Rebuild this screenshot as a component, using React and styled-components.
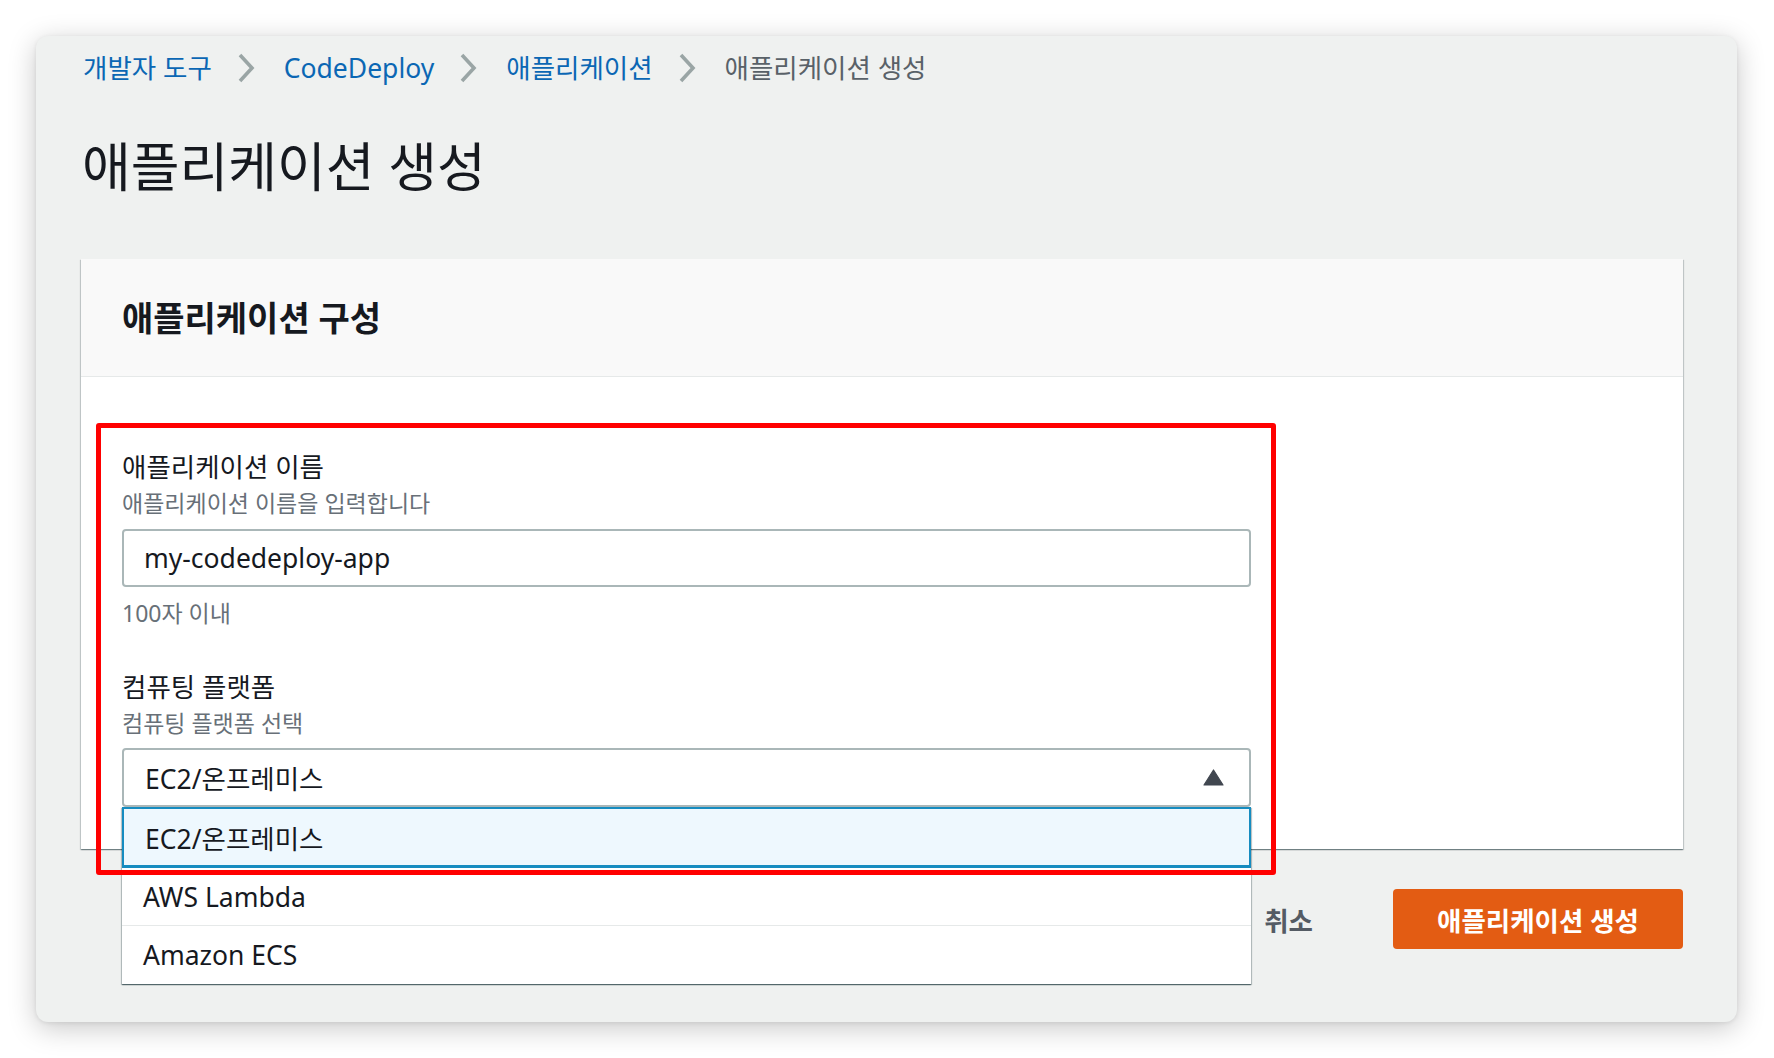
import React from "react";
import styled, { createGlobalStyle } from "styled-components";

const GlobalStyle = createGlobalStyle`
  html, body {
    margin: 0;
    padding: 0;
    background: #ffffff;
  }
  body {
    font-family: "Noto Sans", "Noto Sans CJK KR", sans-serif;
    color: #16191f;
  }
  * {
    box-sizing: border-box;
  }
`;

const crumbs = [
  { label: "개발자 도구", link: true },
  { label: "CodeDeploy", link: true },
  { label: "애플리케이션", link: true },
  { label: "애플리케이션 생성", link: false },
];

const platforms = ["EC2/온프레미스", "AWS Lambda", "Amazon ECS"];

function Chevron() {
  return (
    <ChevronIcon width="18" height="30" viewBox="0 0 18 30" aria-hidden="true">
      <polyline
        points="3,2 15,15 3,28"
        fill="none"
        stroke="#9aa5a5"
        strokeWidth="3.6"
        strokeLinejoin="miter"
      />
    </ChevronIcon>
  );
}

function CaretUp() {
  return (
    <svg width="21" height="17" viewBox="0 0 21 17" aria-hidden="true">
      <path d="M10.5 1 L20 16 L1 16 Z" fill="#414750" stroke="#414750" strokeWidth="1.2" strokeLinejoin="round" />
    </svg>
  );
}

export default function App() {
  const selected = platforms[0];

  return (
    <Page>
      <GlobalStyle />
      <Window>
        <Breadcrumbs>
          {crumbs.map((crumb, index) => (
            <React.Fragment key={crumb.label}>
              {index > 0 && <Chevron />}
              <Crumb $link={crumb.link}>{crumb.label}</Crumb>
            </React.Fragment>
          ))}
        </Breadcrumbs>

        <Heading>애플리케이션 생성</Heading>

        <Panel>
          <PanelHeader>
            <PanelTitle>애플리케이션 구성</PanelTitle>
          </PanelHeader>
          <PanelBody>
            <FormColumn>
              <Label>애플리케이션 이름</Label>
              <Description>애플리케이션 이름을 입력합니다</Description>
              <TextInput readOnly value="my-codedeploy-app" />
              <Constraint>100자 이내</Constraint>

              <Label $spaced>컴퓨팅 플랫폼</Label>
              <Description>컴퓨팅 플랫폼 선택</Description>
              <SelectWrap>
                <SelectBox>
                  <span>{selected}</span>
                  <CaretUp />
                </SelectBox>
                <Menu>
                  {platforms.map((item) => (
                    <Option key={item} $selected={item === selected}>
                      {item}
                    </Option>
                  ))}
                </Menu>
              </SelectWrap>
            </FormColumn>
            <Highlight />
          </PanelBody>
        </Panel>

        <Footer>
          <CancelButton>취소</CancelButton>
          <PrimaryButton>애플리케이션 생성</PrimaryButton>
        </Footer>
      </Window>
    </Page>
  );
}

const Page = styled.div`
  padding: 36px 37px 37px 36px;
  background: #ffffff;
`;

const Window = styled.div`
  background: #eff1f0;
  border-radius: 12px;
  box-shadow: 0 6px 28px rgba(0, 0, 0, 0.22), 0 1px 4px rgba(0, 0, 0, 0.08);
  padding: 16px 54px 73px 45px;
`;

const Breadcrumbs = styled.nav`
  display: flex;
  align-items: center;
  height: 32px;
  padding-left: 2px;
`;

const ChevronIcon = styled.svg`
  flex: none;
  margin: 0 29px 0 25px;
`;

const Crumb = styled.span`
  font-size: 26.5px;
  line-height: 32px;
  color: ${(p) => (p.$link ? "#0b67b4" : "#596168")};
  white-space: nowrap;
`;

const Heading = styled.h1`
  margin: 53px 0 0 1px;
  font-size: 53px;
  line-height: 60px;
  font-weight: 400;
  color: #16191f;
`;

const Panel = styled.section`
  margin-top: 62px;
  background: #ffffff;
  box-shadow: 0 1px 1px 0 rgba(0, 28, 36, 0.35), 1px 1px 1px 0 rgba(0, 28, 36, 0.15),
    -1px 1px 1px 0 rgba(0, 28, 36, 0.15);
`;

const PanelHeader = styled.div`
  display: flex;
  align-items: center;
  height: 118px;
  padding-left: 41px;
  background: #f9f9f9;
  border-bottom: 1px solid #e6e9e9;
`;

const PanelTitle = styled.h2`
  margin: 0;
  font-size: 34px;
  line-height: 40px;
  font-weight: 700;
  color: #16191f;
`;

const PanelBody = styled.div`
  position: relative;
  padding: 74px 41px 42px;
`;

const FormColumn = styled.div`
  width: 1129px;
  display: flex;
  flex-direction: column;
`;

const Label = styled.div`
  margin-top: ${(p) => (p.$spaced ? "44px" : "0")};
  font-size: 26.5px;
  line-height: 32px;
  color: #16191f;
`;

const Description = styled.div`
  margin-top: 6px;
  font-size: 23px;
  line-height: 28px;
  color: #687078;
`;

const TextInput = styled.input`
  margin-top: 12px;
  height: 58px;
  width: 100%;
  padding: 0 20px;
  border: 2px solid #aab7b8;
  border-radius: 4px;
  background: #ffffff;
  font-family: "Noto Sans", "Noto Sans CJK KR", sans-serif;
  font-size: 26.5px;
  color: #16191f;
  outline: none;
`;

const Constraint = styled.div`
  margin-top: 12px;
  font-size: 23px;
  line-height: 28px;
  color: #687078;
`;

const SelectWrap = styled.div`
  position: relative;
  margin-top: 11px;
`;

const SelectBox = styled.div`
  display: flex;
  align-items: center;
  justify-content: space-between;
  height: 59px;
  padding: 0 25px 0 21px;
  border: 2px solid #aab7b8;
  border-radius: 4px;
  background: #ffffff;
  font-size: 26.5px;
  color: #16191f;
`;

const Menu = styled.ul`
  position: absolute;
  top: 100%;
  left: 0;
  right: 0;
  z-index: 2;
  margin: 0;
  padding: 0;
  list-style: none;
  background: #ffffff;
  box-shadow: 0 1px 1px 0 rgba(0, 28, 36, 0.45), 1px 1px 1px 0 rgba(0, 28, 36, 0.2),
    -1px 1px 1px 0 rgba(0, 28, 36, 0.2);
`;

const Option = styled.li`
  display: flex;
  align-items: center;
  height: ${(p) => (p.$selected ? "61px" : "58px")};
  padding: 0 21px;
  font-size: 26.5px;
  color: #16191f;
  background: ${(p) => (p.$selected ? "#eef8fe" : "#ffffff")};
  border: ${(p) => (p.$selected ? "2px solid #168cc0" : "none")};
  border-bottom: ${(p) => (p.$selected ? "3px solid #168cc0" : "1px solid #e6e9e9")};

  &:last-child {
    border-bottom: none;
  }
`;

const Highlight = styled.div`
  position: absolute;
  left: 15px;
  top: 46px;
  width: 1180px;
  height: 452px;
  z-index: 3;
  border: 5px solid #ff0000;
  border-radius: 3px;
  pointer-events: none;
`;

const Footer = styled.div`
  display: flex;
  justify-content: flex-end;
  align-items: center;
  gap: 80px;
  margin-top: 40px;
  height: 60px;
`;

const CancelButton = styled.button`
  padding: 0;
  border: none;
  background: none;
  font-family: "Noto Sans", "Noto Sans CJK KR", sans-serif;
  font-size: 26.5px;
  font-weight: 700;
  color: #545b64;
`;

const PrimaryButton = styled.button`
  width: 290px;
  height: 60px;
  border: none;
  border-radius: 4px;
  background: #e35c13;
  font-family: "Noto Sans", "Noto Sans CJK KR", sans-serif;
  font-size: 26.5px;
  font-weight: 700;
  color: #ffffff;
`;
